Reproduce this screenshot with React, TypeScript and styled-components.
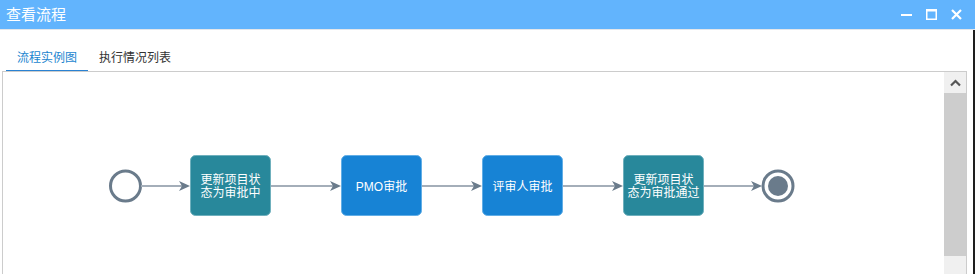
import React from 'react';
import styled, { createGlobalStyle } from 'styled-components';

const GlobalStyle = createGlobalStyle`
  html, body {
    margin: 0;
    padding: 0;
    background: #fff;
  }
  body {
    font-family: "Liberation Sans", "Noto Sans CJK SC", sans-serif;
  }
`;

const Window = styled.div`
  width: 975px;
  height: 274px;
  display: flex;
  flex-direction: column;
  overflow: hidden;
  background: #fff;
`;

const TitleBar = styled.div`
  height: 29px;
  flex: none;
  display: flex;
  align-items: center;
  justify-content: space-between;
  padding: 0 13px 0 6px;
  background: #62b4fd;
  border-bottom: 1px solid #e3e6ea;
`;

const Title = styled.div`
  color: #fff;
  font-size: 15px;
  line-height: 16px;
  font-family: "Noto Sans CJK SC", sans-serif;
  margin-top: -2px;
`;

const Controls = styled.div`
  display: flex;
  align-items: center;
  gap: 14px;
`;

const Body = styled.div`
  flex: 1;
  display: flex;
  flex-direction: column;
  padding: 0 6px 0 2px;
  border-right: 2px solid #1e1e1e;
  min-height: 0;
`;

const Tabs = styled.div`
  height: 41px;
  flex: none;
  display: flex;
  align-items: flex-end;
  padding-left: 4px;
`;

const Tab = styled.div<{ $active?: boolean }>`
  height: 32px;
  padding: 0 11px;
  box-sizing: border-box;
  display: flex;
  align-items: center;
  font-size: 12px;
  font-family: "Noto Sans CJK SC", sans-serif;
  color: ${(p) => (p.$active ? '#1a85cf' : '#333')};
  border-bottom: 2px solid ${(p) => (p.$active ? '#2a82d2' : 'transparent')};
  margin-bottom: -1px;
  padding-top: 2px;
`;

const ContentBox = styled.div`
  flex: 1;
  display: flex;
  border: 1px solid #cccccc;
  border-bottom: none;
  min-height: 0;
`;

const Canvas = styled.div`
  flex: 1;
  position: relative;
  overflow: hidden;
`;

const Scrollbar = styled.div`
  width: 22px;
  flex: none;
  display: flex;
  flex-direction: column;
  background: #f0f0f0;
`;

const ScrollButton = styled.div`
  height: 21px;
  display: flex;
  align-items: center;
  justify-content: center;
`;

const Thumb = styled.div`
  height: 163px;
  background: #cdcdcd;
`;

const TEAL = '#28889b';
const BLUE = '#1783d5';
const LINE = '#a4aeb9';
const DARK = '#6a7b8b';

type Node = { x: number; lines: string[]; color: string; border: string };

const nodes: Node[] = [
  { x: 190, lines: ['更新项目状', '态为审批中'], color: TEAL, border: '#6fb0bd' },
  { x: 341, lines: ['PMO审批'], color: BLUE, border: '#62aee6' },
  { x: 482, lines: ['评审人审批'], color: BLUE, border: '#62aee6' },
  { x: 623, lines: ['更新项目状', '态为审批通过'], color: TEAL, border: '#6fb0bd' },
];

const CY = 186;
const NW = 81;
const NH = 61;

const Arrow = ({ from, to }: { from: number; to: number }) => (
  <g>
    <line x1={from} y1={CY} x2={to - 2} y2={CY} stroke={LINE} strokeWidth={2} />
    <path d={`M${to - 11} ${CY - 5} L${to} ${CY} L${to - 11} ${CY + 5} L${to - 8} ${CY} Z`} fill={DARK} />
  </g>
);

const Diagram = () => (
  <svg width={941} height={202} style={{ display: 'block' }}>
    <g transform="translate(-3,-72)">
      <circle cx={125.5} cy={CY} r={15} fill="#fff" stroke={DARK} strokeWidth={3} />
      <Arrow from={141} to={190} />
      <Arrow from={271} to={341} />
      <Arrow from={422} to={482} />
      <Arrow from={563} to={623} />
      <Arrow from={704} to={762} />
      <circle cx={778} cy={CY} r={15} fill="#fff" stroke={DARK} strokeWidth={3} />
      <circle cx={778} cy={CY} r={10} fill={DARK} />
      {nodes.map((n) => (
        <g key={n.x}>
          <rect
            x={n.x + 0.5}
            y={155.5}
            width={NW - 1}
            height={NH - 1}
            rx={5}
            fill={n.color}
            stroke={n.border}
            strokeWidth={1}
          />
          <text
            x={n.x + NW / 2}
            textAnchor="middle"
            fill="#fff"
            fontSize={12}
            fontFamily={'"Liberation Sans", "Noto Sans CJK SC", sans-serif'}
          >
            {n.lines.map((l, i) => (
              <tspan
                key={i}
                x={n.x + NW / 2}
                y={CY + 4.5 + (i - (n.lines.length - 1) / 2) * 13.5}
              >
                {l}
              </tspan>
            ))}
          </text>
        </g>
      ))}
    </g>
  </svg>
);

export default function App() {
  return (
    <Window>
      <GlobalStyle />
      <TitleBar>
        <Title>查看流程</Title>
        <Controls>
          <svg width={11} height={11} viewBox="0 0 11 11">
            <rect x={0} y={5} width={11} height={2} fill="#fff" />
          </svg>
          <svg width={11} height={11} viewBox="0 0 11 11">
            <rect x={0.75} y={0.75} width={9.5} height={9.5} fill="none" stroke="#fff" strokeWidth={1.5} />
            <rect x={0} y={0} width={11} height={2.5} fill="#fff" />
          </svg>
          <svg width={11} height={11} viewBox="0 0 11 11">
            <path d="M1 1 L10 10 M10 1 L1 10" stroke="#fff" strokeWidth={2.2} />
          </svg>
        </Controls>
      </TitleBar>
      <Body>
        <Tabs>
          <Tab $active>流程实例图</Tab>
          <Tab>执行情况列表</Tab>
        </Tabs>
        <ContentBox>
          <Canvas>
            <Diagram />
          </Canvas>
          <Scrollbar>
            <ScrollButton>
              <svg width={11} height={8} viewBox="0 0 11 8">
                <path d="M1 6.5 L5.5 2 L10 6.5" fill="none" stroke="#555" strokeWidth={2.2} />
              </svg>
            </ScrollButton>
            <Thumb />
          </Scrollbar>
        </ContentBox>
      </Body>
    </Window>
  );
}
